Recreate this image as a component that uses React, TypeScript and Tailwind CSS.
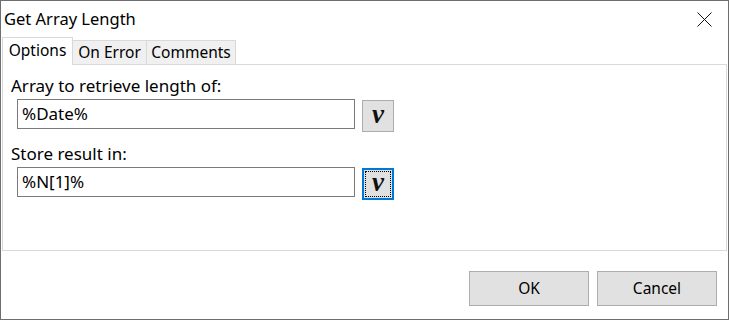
import { ReactNode } from 'react';

const ui = "font-['Segoe_UI','Noto_Sans',sans-serif]";

const VarGlyph = () => (
  <span className="font-['Liberation_Serif',serif] italic font-bold text-[27px] leading-none -mt-[4px] text-[#111]">v</span>
);

const VarButton = ({ focused = false }: { focused?: boolean }) => (
  <button
    className={
      focused
        ? 'w-[32px] h-[32px] mt-px border-2 border-[#0078d7] bg-[#e1e1e1] p-px flex'
        : 'w-[32px] h-[32px] mt-px border border-[#adadad] bg-[#e1e1e1] flex items-center justify-center'
    }
  >
    {focused ? (
      <span className="flex-1 border border-dotted border-black flex items-center justify-center">
        <VarGlyph />
      </span>
    ) : (
      <VarGlyph />
    )}
  </button>
);

const Field = ({ label, value, focused }: { label: string; value: string; focused?: boolean }) => (
  <div className="flex flex-col">
    <div className="text-[17px] leading-[23px] text-black">{label}</div>
    <div className="flex items-start gap-[7px] pl-[6px] mt-[2px]">
      <div className="w-[338px] h-[30px] border border-[#7a7a7a] bg-white pl-[4px] text-[17px] leading-[27px] text-black">
        {value}
      </div>
      <VarButton focused={focused} />
    </div>
  </div>
);

const Tab = ({ children, active, className }: { children: ReactNode; active?: boolean; className: string }) => (
  <div
    className={
      active
        ? `relative z-10 -mb-px h-[28px] bg-white border-l border-t border-r border-[#d9d9d9] flex items-center justify-center text-[15.5px] pb-[2px] ${className}`
        : `h-[24px] bg-[#f0f0f0] border-t border-r border-[#d9d9d9] flex items-center justify-center text-[15.5px] ${className}`
    }
  >
    {children}
  </div>
);

export default function App() {
  return (
    <div className={`w-[729px] h-[320px] border border-[#6f6f6f] bg-white flex flex-col ${ui}`}>
      <div className="h-[36px] flex items-center justify-between pl-[3px] pr-[16px]">
        <span className="text-[16.5px] text-black pt-[1px]">Get Array Length</span>
        <svg width="15" height="15" viewBox="0 0 15 15" className="mt-[1px]">
          <path d="M0.5 0.5 L14.5 14.5 M14.5 0.5 L0.5 14.5" stroke="#111" strokeWidth="1" />
        </svg>
      </div>
      <div className="px-px flex flex-col">
        <div className="flex items-end h-[27px]">
          <Tab active className="w-[71px]">Options</Tab>
          <Tab className="w-[74px]">On Error</Tab>
          <Tab className="w-[89px]">Comments</Tab>
        </div>
        <div className="h-[187px] border border-[#d9d9d9] bg-white pl-[8px] pt-[9px] flex flex-col gap-[10px]">
          <Field label="Array to retrieve length of:" value="%Date%" />
          <Field label="Store result in:" value="%N[1]%" focused />
        </div>
      </div>
      <div className="flex justify-end gap-[8px] pt-[20px] pr-[11px]">
        <button className="w-[120px] h-[35px] border border-[#adadad] bg-[#e1e1e1] text-[15.5px] text-black">OK</button>
        <button className="w-[120px] h-[35px] border border-[#adadad] bg-[#e1e1e1] text-[15.5px] text-black">Cancel</button>
      </div>
    </div>
  );
}
